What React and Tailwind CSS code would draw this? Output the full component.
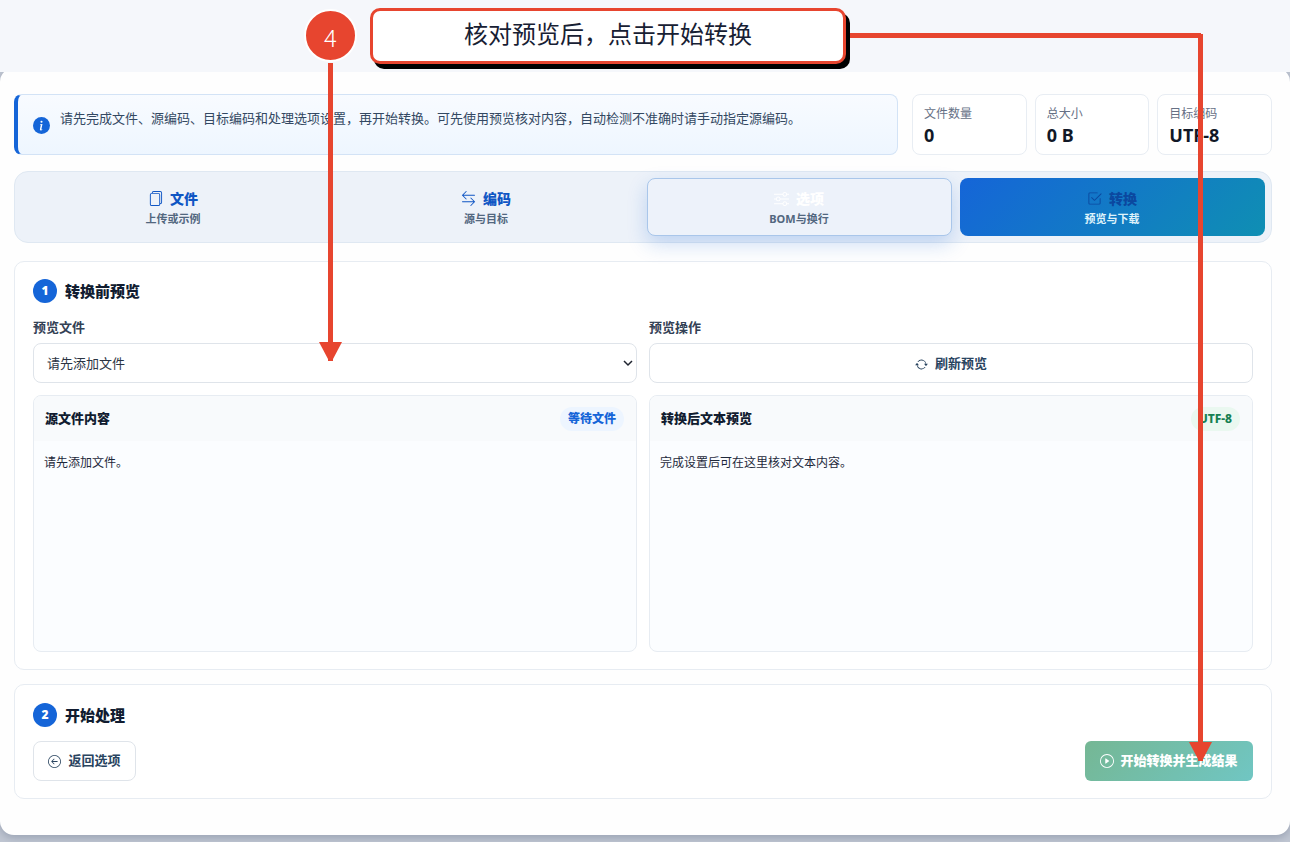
import React from 'react';
import {
  BsFiles,
  BsArrowLeftRight,
  BsSliders,
  BsCheck2Square,
  BsArrowRepeat,
  BsArrowLeftCircle,
  BsPlayCircle,
} from 'react-icons/bs';


const stats = [
  { label: '文件数量', value: '0' },
  { label: '总大小', value: '0 B' },
  { label: '目标编码', value: 'UTF-8' },
];

const tabs = [
  { icon: BsFiles, title: '文件', sub: '上传或示例', box: 'border-transparent', titleColor: 'text-[#0f56c4]', subColor: 'text-[#52677f]' },
  { icon: BsArrowLeftRight, title: '编码', sub: '源与目标', box: 'border-transparent', titleColor: 'text-[#0f56c4]', subColor: 'text-[#52677f]' },
  { icon: BsSliders, title: '选项', sub: 'BOM与换行', box: 'border-[#a9c6ea] bg-[#edf2fa] shadow-[0_8px_20px_rgba(21,101,216,0.22)]', titleColor: 'text-white', subColor: 'text-[#52677f]' },
  { icon: BsCheck2Square, title: '转换', sub: '预览与下载', box: 'border-transparent bg-linear-[135deg,#1565d8,#0f8fb3] bg-origin-border', titleColor: 'text-[#0b489f]', subColor: 'text-[#dff3fb]' },
];

function SectionTitle({ num, children }) {
  return (
    <div className="flex h-6 items-center gap-2">
      <span className="flex size-6 items-center justify-center rounded-full bg-[#1565d8] text-xs font-black text-white">{num}</span>
      <h2 className="text-[15px] font-black text-[#111c30]">{children}</h2>
    </div>
  );
}

function PreviewBox({ title, badge, badgeClass, children }) {
  return (
    <div className="h-[257px] overflow-hidden rounded-lg border border-[#e7ecf2] bg-[#fbfdff]">
      <div className="flex h-[45px] items-center justify-between bg-[#f8fafc] pr-3 pl-[11px]">
        <strong className="text-[13px] font-black text-[#111c30]">{title}</strong>
        <span className={`rounded-full px-2 text-xs leading-6 font-extrabold ${badgeClass}`}>{badge}</span>
      </div>
      <p className="px-[10px] pt-[13px] text-xs leading-[18px] text-[#1e293b]">{children}</p>
    </div>
  );
}

// Numbered callout with its two arrows, drawn over the page
function Callout() {
  return (
    <div className="pointer-events-none absolute inset-0 z-20">
      <svg className="absolute inset-0" width="1290" height="842" fill="#e7452f">
        <rect x="328" y="63" width="5" height="298" />
        <path d="M319 342h23l-9.500 18h-4z" />
        <rect x="849" y="33" width="352" height="5" />
        <rect x="1198" y="34" width="5" height="727" />
        <path d="M1189 742h23l-9.500 18h-4z" />
      </svg>
      <div className="absolute top-[9px] left-[304px] flex h-[53px] w-[53px] items-center justify-center rounded-full border-2 border-white bg-[#e7452f] pt-[2px] font-['Noto_Sans_CJK_SC',sans-serif] text-2xl font-light text-white">4</div>
      <div className="absolute top-[8px] left-[370px] flex h-14 w-[476px] items-center justify-center rounded-[10px] border-3 border-[#e7452f] bg-white pb-[5px] text-2xl text-[#172033] shadow-[4px_5px_0_#000]">核对预览后，点击开始转换</div>
    </div>
  );
}

export default function App() {
  return (
    <div className="relative h-[842px] w-[1290px] overflow-hidden bg-[#c1c7d3] font-['Noto_Sans','Noto_Sans_CJK_SC',sans-serif]">
      <div className="relative z-10 h-[72px] bg-[#f5f7fb]" />
      <main className="-mt-1 h-[767px] rounded-[14px] bg-[#fefefe] pt-[26px] pr-[18px] pl-[14px] shadow-[0_3px_8px_rgba(80,95,120,0.35)]">

        <div className="flex gap-[14px]">
          <div className="flex h-[61px] w-[884px] items-center gap-[10px] rounded-lg border border-l-4 border-[#d3e3f6] border-l-[#1565d8] bg-linear-to-b from-[#f8fbff] to-[#eef6ff] pt-px pl-[15px]">
            <svg className="size-[17px]" viewBox="0 0 16 16">
              <circle cx="8" cy="8" r="8" fill="#1565d8" />
              <path fill="#fff" d="m8.930 6.588-2.290.287-.082.380.450.083c.294.070.352.176.288.469l-.738 3.468c-.194.897.105 1.319.808 1.319.545 0 1.178-.252 1.465-.598l.088-.416c-.200.176-.492.246-.686.246-.275 0-.375-.193-.304-.533zM9 4.500a1 1 0 1 1-2 0 1 1 0 0 1 2 0" />
            </svg>
            <p className="pb-[13px] text-[13px] text-[#334862]">请先完成文件、源编码、目标编码和处理选项设置，再开始转换。可先使用预览核对内容，自动检测不准确时请手动指定源编码。</p>
          </div>
          <div className="grid flex-1 grid-cols-3 gap-2">
            {stats.map((s) => (
              <div key={s.label} className="h-[61px] rounded-lg border border-[#e8edf3] bg-white px-[11px] pt-[10px]">
                <div className="text-xs leading-[18px] text-[#667085]">{s.label}</div>
                <div className="text-lg leading-6 font-bold text-[#111827]">{s.value}</div>
              </div>
            ))}
          </div>
        </div>

        <nav className="mt-4 grid h-[72px] grid-cols-4 gap-2 rounded-[14px] border border-[#dfe8f2] bg-[#edf2f9] p-[6px]">
          {tabs.map(({ icon: Icon, title, sub, box, titleColor, subColor }) => (
            <button key={title} className={`flex flex-col items-center rounded-lg border pt-[8px] pr-px ${box}`}>
              <span className={`flex h-[23px] items-center gap-[7px] text-sm font-black ${titleColor}`}>
                <Icon size={15} />
                {title}
              </span>
              <span className={`text-[11px] leading-[18px] font-bold ${subColor}`}>{sub}</span>
            </button>
          ))}
        </nav>

        <section className="mt-[18px] h-[409px] rounded-[10px] border border-[#e7ecf2] bg-white px-[18px] pt-[17px]">
          <SectionTitle num="1">转换前预览</SectionTitle>
          <div className="mt-[14px] grid grid-cols-2 gap-x-3 gap-y-3">
            <div>
              <div className="mb-[6px] text-[13px] leading-5 font-bold text-[#334155]">预览文件</div>
              <div className="flex h-10 items-center justify-between rounded-lg border border-[#dfe4ea] bg-white pt-[2px] pr-[3px] pl-[13px] text-[13px] text-[#2b3443]">
                请先添加文件
                <svg width="10" height="10" viewBox="0 0 10 10" fill="none" stroke="#1f2430" strokeWidth="1.500">
                  <path d="M1 2l4 4 4-4" />
                </svg>
              </div>
            </div>
            <div>
              <div className="mb-[6px] text-[13px] leading-5 font-bold text-[#334155]">预览操作</div>
              <button className="flex h-10 w-full items-center justify-center gap-[7px] rounded-lg border border-[#dfe4ea] bg-white pt-[2px] text-[13px] font-bold text-[#29445f]">
                <BsArrowRepeat size={13} />
                刷新预览
              </button>
            </div>
            <PreviewBox title="源文件内容" badge="等待文件" badgeClass="bg-[#edf5ff] text-[#1565d8]">请先添加文件。</PreviewBox>
            <PreviewBox title="转换后文本预览" badge="UTF-8" badgeClass="bg-[#eaf8f0] text-[#168052]">完成设置后可在这里核对文本内容。</PreviewBox>
          </div>
        </section>

        <section className="mt-[14px] h-[115px] rounded-[10px] border border-[#e7ecf2] bg-white px-[18px] pt-[18px]">
          <SectionTitle num="2">开始处理</SectionTitle>
          <div className="mt-[14px] flex justify-between text-[13px] font-bold">
            <button className="flex h-10 w-[103px] items-center justify-center gap-[7px] rounded-lg border border-[#dfe4ea] bg-white text-[#29445f]">
              <BsArrowLeftCircle size={13} />
              返回选项
            </button>
            <button className="flex h-10 w-[168px] items-center justify-center gap-[6px] rounded-md bg-linear-[135deg,#75b794,#70c6c3] font-black text-white">
              <BsPlayCircle size={14} />
              开始转换并生成结果
            </button>
          </div>
        </section>
      </main>
      <Callout />
    </div>
  );
}
